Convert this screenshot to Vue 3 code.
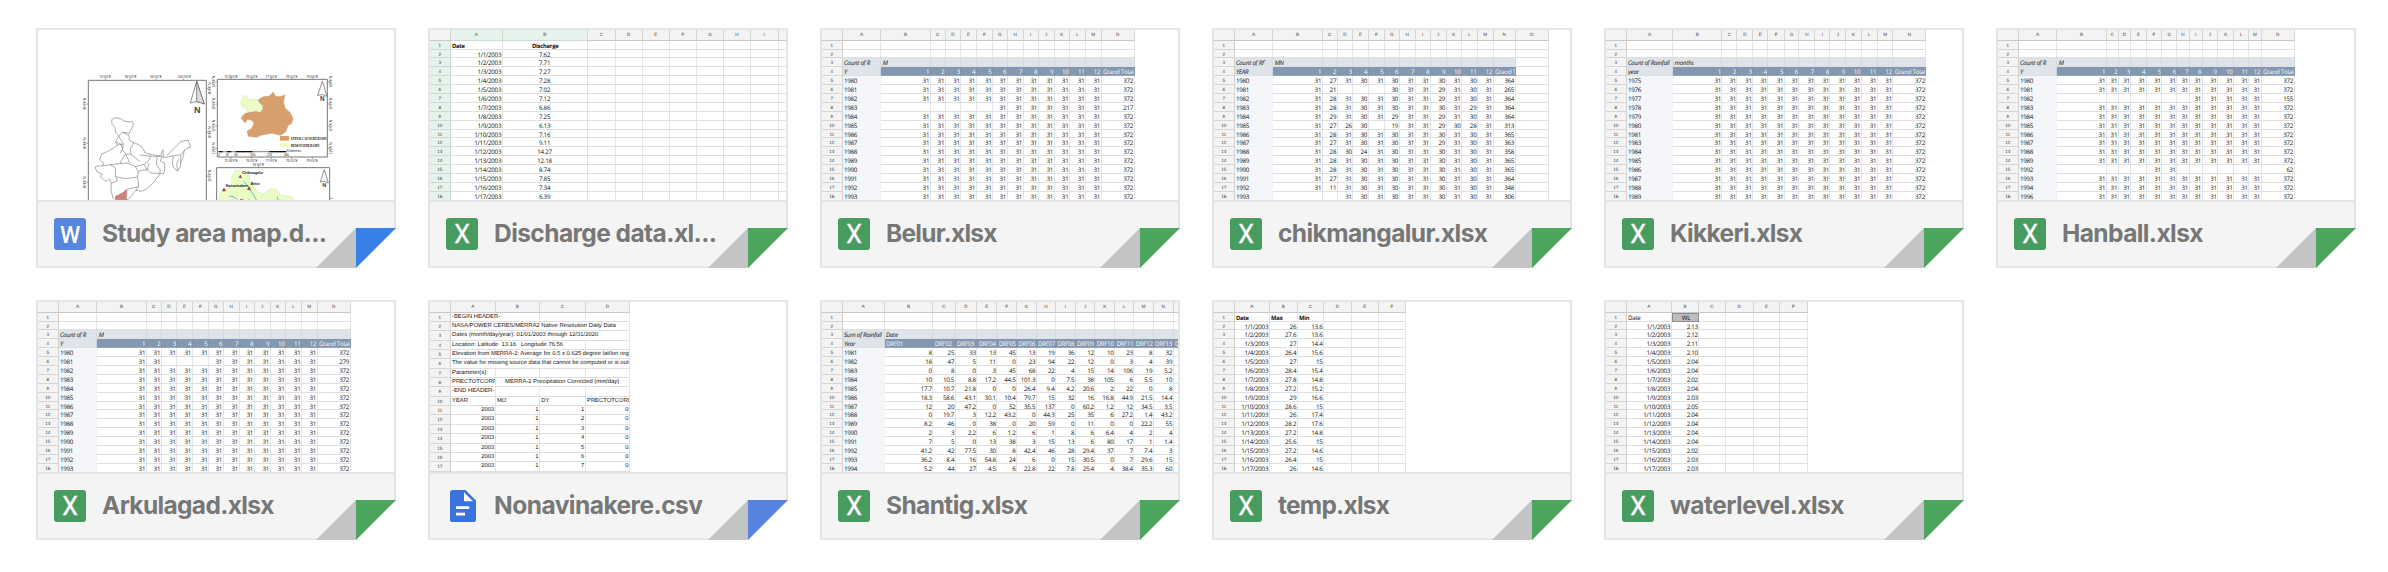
<script setup>
const months = ['1', '2', '3', '4', '5', '6', '7', '8', '9', '10', '11', '12']
const full = Array(12).fill('31').join(' ')
const letters = 'ABCDEFGHIJKLMNO'.split('')

// '_' marks an empty cell in the compact rows below
const parse = (line) => line.split(' ').map((v) => (v === '_' ? '' : v))

const monthly = (measure, rowField, colField, years, special = {}, total = 'Grand Total') => [
  [], [],
  [measure, colField],
  [rowField, ...months, total],
  ...years.map((y) => [String(y), ...parse(special[y] || full + ' 372')]),
]
const range = (a, b) => Array.from({ length: b - a + 1 }, (_, i) => a + i)

const pivotCols = [38.7, 49.3, 15, 15.7, 15.3, 16.3, 14.7, 16, 15, 16, 15.3, 16, 15.7, 33]
const dates = range(1, 17).map((d) => `1/${d}/2003`)
const noFirstHalf = '_ _ _ _ _ 31 31 31 31 31 31 31 217'

const discharge = parse('7.62 7.71 7.27 7.28 7.02 7.12 6.86 7.25 6.13 7.16 9.11 14.27 12.18 8.74 7.85 7.34 6.39')
const maxT = parse('26 27.6 27 26.4 27 28.4 27.8 27.2 29 28.6 26 28.2 27.2 25.6 27.2 26.4 26')
const minT = parse('13.6 13.6 14.4 15.6 15 15.4 14.8 15.2 16.6 15 17.4 17.6 14.8 15 14.6 15 14.6')
const levels = parse('2.13 2.12 2.11 2.10 2.04 2.04 2.02 2.04 2.03 2.05 2.04 2.04 2.04 2.04 2.02 2.03 2.03')

const chik = {
  1980: '31 27 31 30 31 30 31 31 30 31 30 31 364',
  1981: '31 21 _ _ _ 30 31 31 29 31 30 31 265',
  1982: '31 28 31 30 31 30 31 31 29 31 30 31 364',
  1983: '31 28 31 30 31 30 31 31 30 31 29 31 364',
  1984: '31 29 31 30 31 29 31 31 29 31 30 31 364',
  1985: '31 27 26 30 _ 19 31 31 29 30 28 31 313',
  1986: '31 28 31 30 31 30 31 31 30 31 30 31 365',
  1987: '31 27 31 30 31 30 31 31 29 31 30 31 363',
  1988: '31 28 30 24 31 30 31 31 30 31 30 31 358',
  1989: '31 28 31 30 31 30 31 31 30 31 30 31 365',
  1990: '31 28 31 30 31 30 31 31 30 31 30 31 365',
  1991: '31 27 31 30 31 30 31 31 30 31 30 31 364',
  1992: '31 11 31 30 31 30 31 31 30 31 30 31 348',
  1993: '_ _ 31 30 31 30 31 31 30 31 30 31 306',
}

const shantig = [
  '1981 8 25 33 13 45 13 19 36 12 10 23 8 32',
  '1982 18 47 5 11 0 23 94 22 12 0 3 4 39',
  '1983 0 8 0 3 45 68 22 4 15 14 106 19 5.2',
  '1984 10 10.5 8.8 17.2 44.5 101.3 0 7.5 38 105 6 5.5 10',
  '1985 17.7 10.7 21.8 0 0 26.4 9.4 4.2 20.6 2 22 0 8',
  '1986 18.3 58.6 43.1 30.1 10.4 79.7 15 32 16 16.8 44.9 21.5 14.4',
  '1987 12 20 47.2 0 52 35.5 137 0 60.2 1.2 12 34.5 3.5',
  '1988 0 19.7 3 12.2 43.2 0 44.3 25 35 6 27.2 1.4 43.2',
  '1989 8.2 46 0 38 0 20 59 0 11 0 0 22.2 55',
  '1990 2 3 2.2 6 1.2 6 1 8 6 6.4 4 2 4',
  '1991 7 5 0 13 38 3 15 13 6 80 17 1 1.4',
  '1992 41.2 42 77.5 30 8 42.4 46 28 29.4 37 7 7.4 3',
  '1993 36.2 8.4 16 54.8 24 6 0 15 30.5 0 7 29.6 15',
  '1994 5.2 44 27 4.5 6 22.8 22 7.8 25.4 4 38.4 35.3 60',
].map(parse)

const csvRows = [
  [{ t: '-BEGIN HEADER-', span: 2 }],
  [{ t: 'NASA/POWER CERES/MERRA2 Native Resolution Daily Data', span: 4 }],
  [{ t: 'Dates (month/day/year): 01/01/2003 through 12/31/2020', span: 4 }],
  [{ t: 'Location: Latitude  13.16   Longitude 76.56', span: 3 }],
  [{ t: 'Elevation from MERRA-2: Average for 0.5 x 0.625 degree lat/lon region', span: 4 }],
  [{ t: 'The value for missing source data that cannot be computed or is outside', span: 4 }],
  ['Parameter(s):'],
  ['PRECTOTCORR', { t: '     MERRA-2 Precipitation Corrected (mm/day)', span: 3 }],
  ['-END HEADER-'],
  ['YEAR', 'MO', 'DY', 'PRECTOTCORR'],
  ...range(1, 7).map((d) => ['2003', '1', String(d), '0']),
]

const files = [
  { name: 'Study area map.d...', width: 225, kind: 'word' },
  { name: 'Discharge data.xl...', width: 223, kind: 'excel',
    sheet: { type: 'selected', cols: [52, 85.3, 27.7, 27, 27, 27.3, 27.3, 26.4, 28, 20], named: 9,
      rows: [['Date', 'Discharge'], ...dates.map((d, i) => [d, discharge[i]])] } },
  { name: 'Belur.xlsx', width: 111.5, kind: 'excel',
    sheet: { type: 'pivot', cols: pivotCols, rows: monthly('Count of R', 'Y', 'M', range(1980, 1993), { 1983: noFirstHalf }) } },
  { name: 'chikmangalur.xlsx', width: 210, kind: 'excel',
    sheet: { type: 'pivot', cols: [...pivotCols.slice(0, 13), 22, 33], plainLast: true,
      rows: monthly('Count of RF', 'YEAR', 'MN', range(1980, 1993), chik) } },
  { name: 'Kikkeri.xlsx', width: 133, kind: 'excel',
    sheet: { type: 'pivot', cols: [46.5, ...pivotCols.slice(1)],
      rows: monthly('Count of Rainfall', 'year', 'months', [...range(1975, 1981), ...range(1983, 1989)]) } },
  { name: 'Hanball.xlsx', width: 141.5, kind: 'excel',
    sheet: { type: 'pivot', cols: [38.7, 49.3, 12, 12.7, 15.3, 15.7, 15, 12.3, 13, 15.7, 15.7, 15.3, 12.3, 33],
      rows: monthly('Count of R', 'Y', 'M', [...range(1980, 1989), 1992, 1993, 1994, 1996], {
        1982: '_ _ _ _ _ _ _ 31 31 31 31 31 155',
        1992: '_ _ _ _ 31 31 _ _ _ _ _ _ 62',
      }) } },
  { name: 'Arkulagad.xlsx', width: 172.5, kind: 'excel',
    sheet: { type: 'pivot', cols: pivotCols,
      rows: monthly('Count of R', 'Y', 'M', range(1980, 1993), { 1981: '31 31 _ _ _ 31 31 31 31 31 31 31 279' }) } },
  { name: 'Nonavinakere.csv', width: 209, kind: 'doc',
    sheet: { type: 'csv', cols: [45, 44.3, 45.7, 44.3], rows: csvRows } },
  { name: 'Shantig.xlsx', width: 142, kind: 'excel',
    sheet: { type: 'pivot', named: 14, cols: [42, 48.7, 22.3, 21.7, 20, 19.7, 19.7, 19.3, 19.7, 19.7, 19.7, 19.3, 19.3, 20, 20],
      rows: [[], [], ['Sum of Rainfall', 'Date'],
        ['Year', ...range(1, 14).map((n) => 'DRF' + String(n).padStart(2, '0'))], ...shantig] } },
  { name: 'temp.xlsx', width: 112, kind: 'excel',
    sheet: { type: 'boldhead', cols: [35, 28, 26.3, 27.7, 27, 27.3],
      rows: [['Date', 'Max', 'Min'], ...dates.map((d, i) => [d, maxT[i], minT[i]])] } },
  { name: 'waterlevel.xlsx', width: 174.5, kind: 'excel',
    sheet: { type: 'level', cols: [45, 27.7, 26.3, 28, 26.7, 27.3],
      rows: [['Date', 'WL'], ...dates.map((d, i) => [d, levels[i]])] } },
]

function cells(sheet, row, r) {
  const out = []
  for (let c = 0; c < sheet.cols.length;) {
    const v = row[out.length]
    const span = v && v.span ? v.span : 1
    const text = v && v.span ? v.t : v || ''
    const width = sheet.cols.slice(c, c + span).reduce((a, b) => a + b, 0)
    const cls = []
    const yearCell = sheet.type === 'pivot' && r > 3 && c === 0
    if (yearCell) cls.push('year')
    else if (/^[\d./]+$/.test(text)) cls.push('num')
    if (sheet.type === 'pivot' && !(sheet.plainLast && c === sheet.cols.length - 1)) {
      if (r === 2) cls.push('field')
      else if (r === 3) cls.push(c === 0 ? 'field' : 'head')
    }
    if (r === 0 && (sheet.type === 'selected' || sheet.type === 'boldhead')) cls.push('bold')
    if (sheet.type === 'selected' && c === 1) cls.push('mid')
    if (sheet.type === 'level' && r === 0 && c === 1) cls.push('mid', 'fill')
    out.push({ text, width, cls })
    c += span
  }
  return out
}
</script>

<template>
  <main class="grid">
    <article v-for="f in files" :key="f.name" class="card">
      <div class="thumb">
        <div v-if="f.sheet" class="sheet" :class="f.sheet.type">
          <div class="row top">
            <span class="rh"></span>
            <span v-for="(w, i) in f.sheet.cols" :key="i" class="ch"
              :class="{ sel: f.sheet.type === 'selected' && i < 2 }" :style="{ width: w + 'px' }">{{ i < (f.sheet.named || 99) ? letters[i] : '' }}</span>
          </div>
          <div v-for="(row, r) in f.sheet.rows" :key="r" class="row">
            <span class="rh">{{ r + 1 }}</span>
            <span v-for="(c, i) in cells(f.sheet, row, r)" :key="i" class="cell" :class="c.cls"
              :style="{ width: c.width + 'px' }">{{ c.text }}</span>
          </div>
        </div>
        <svg v-else class="map" viewBox="24 30 1068 510" width="356" height="170">
          <g fill="none" stroke="#777" stroke-width="3">
            <path d="M175 545V181H529V545" />
            <path d="M562 178H892V411H562Z" />
            <path d="M560 545V443H899V545" />
          </g>
          <g stroke="#777" stroke-width="2">
            <path d="M226 175v6M300 175v6M378 175v6M460 175v6M169 252h6M169 370h6M169 487h6M529 205h6M529 337h6M529 468h6M603 172v6M665 172v6M724 172v6M785 172v6M847 172v6M603 411v6M665 411v6M724 411v6M785 411v6M847 411v6M556 185h6M556 252h6M556 318h6M556 385h6M892 185h6M892 252h6M892 318h6M892 385h6M899 535h9M685 437v6" />
          </g>
          <g class="tick">
            <text x="226" y="174">70°0'0"E</text><text x="302" y="174">80°0'0"E</text><text x="378" y="174">90°0'0"E</text><text x="463" y="174">100°0'0"E</text>
            <text x="603" y="173">75°30'0"E</text><text x="665" y="173">76°0'0"E</text><text x="724" y="173">77°0'0"E</text><text x="785" y="173">78°0'0"E</text><text x="847" y="173">79°0'0"E</text>
            <text x="603" y="426">75°30'0"E</text><text x="665" y="426">76°0'0"E</text><text x="724" y="426">77°0'0"E</text><text x="785" y="426">78°0'0"E</text><text x="847" y="426">79°0'0"E</text>
            <text x="685" y="438">76°0'0"E</text>
            <text transform="translate(169 252) rotate(-90)">30°0'0"N</text><text transform="translate(169 370) rotate(-90)">20°0'0"N</text><text transform="translate(169 487) rotate(-90)">10°0'0"N</text>
            <text transform="translate(542 205) rotate(-90)">30°0'0"N</text><text transform="translate(542 337) rotate(-90)">20°0'0"N</text><text transform="translate(542 468) rotate(-90)">10°0'0"N</text>
            <text transform="translate(556 185) rotate(-90)">14°0'0"N</text><text transform="translate(556 252) rotate(-90)">13°0'0"N</text><text transform="translate(556 318) rotate(-90)">12°0'0"N</text><text transform="translate(556 385) rotate(-90)">11°0'0"N</text>
            <text transform="translate(905 185) rotate(-90)">14°0'0"N</text><text transform="translate(905 252) rotate(-90)">13°0'0"N</text><text transform="translate(905 318) rotate(-90)">12°0'0"N</text><text transform="translate(905 385) rotate(-90)">11°0'0"N</text>
          </g>
          <g fill="#fff" stroke="#555" stroke-width="2">
            <path d="M500 184L481 249Q500 240 523 252Z" /><path d="M500 184L523 252L500 244Z" fill="#ddd" />
            <path d="M877 184L863 226Q877 220 891 229Z" />
            <path d="M883 449L871 486Q883 480 895 489Z" />
          </g>
          <text class="north" x="502" y="279" font-size="27">N</text>
          <text class="north" x="877" y="243" font-size="19">N</text>
          <text class="north" x="883" y="501" font-size="17">N</text>
          <path d="M256 545L256 529L275 520L291 508L289 545Z" fill="#cd8580" stroke="#a55" />
          <g fill="none" stroke="#777" stroke-width="1.8" stroke-linejoin="round">
            <path d="M245 299L256 293L272 296L283 303L297 306L307 304L310 315L303 329L298 340L287 338L278 337L266 348L258 338L255 323L246 313Z" />
            <path d="M266 348L257 366L262 375L250 385L233 394L215 402L209 420L220 429L219 438L204 437L195 442L202 456L218 463L210 470L228 484L239 477L244 490L243 511L250 538M266 348L280 372L277 390L287 402L277 416L270 431L241 434L219 438M278 337L297 346L298 361L312 368L301 387L303 403L330 425M312 368L334 378L346 399L390 409L399 389L400 413L452 404L471 384L482 382L474 360L452 365L430 388L410 407M330 405L368 409L400 408M287 402L303 403M262 375L280 372M357 429L352 450L362 459L378 460L389 460L401 462L405 445L403 429L391 423L396 408M352 450L342 433L358 420L362 409M241 434L256 444L257 470L287 476L323 471L325 454L316 440L292 429L270 431M316 440L342 433M325 454L339 450L352 450M323 471L326 500L318 510L334 514L350 507L372 486L390 461M326 500L291 508M278 545L298 535L318 510M430 408L427 432L432 444L443 453L452 438L452 404M443 453L440 430L446 418M463 388L459 412L453 427M382 409L379 433L391 450L389 460" />
            <path d="M257 366L271 371L278 386L270 400M244 490L262 482L257 470M287 402L300 430" />
          </g>
          <path d="M684 240L700 230L718 228L730 216L736 228L748 230L765 225L760 246L766 266L779 276L789 295L785 310L774 317L767 335L752 346L725 340L692 346L680 352L655 349L651 334L664 326L672 311L668 302L653 298L645 309L633 294L645 280L676 274L692 276L698 263Z" fill="#d69f6c" stroke="#b98659" />
          <path d="M632 246L637 239L641 227L650 227L657 239L671 236L683 240L685 249L697 255L698 267L691 276L678 272L653 276L647 265L636 260Z" fill="#ebfdc5" stroke="#ccdda7" />
          <path d="M750 348h27v14h-27z" fill="#d69f6c" /><path d="M750 369h27v12h-27z" fill="#ebfdc5" />
          <text class="legend" x="782" y="360" textLength="108">UPPER CAUVERY BASIN</text>
          <text class="legend" x="782" y="380" textLength="86">HEMAVATHI BASIN</text>
          <path d="M566 395H769" stroke="#999" stroke-width="4" /><path d="M566 395h12M591 395h13M617 395h51M718 395h51" stroke="#111" stroke-width="4" />
          <text class="scale" x="771" y="397" textLength="43">Kilometers</text>
          <text class="scale" x="565" y="408">0</text><text class="scale" x="587" y="408">45</text><text class="scale" x="613" y="408">90</text><text class="scale" x="661" y="408">180</text><text class="scale" x="711" y="408">270</text><text class="scale" x="762" y="408">360</text>
          <path d="M566 545L571 518L582 509L604 502L606 467L617 450L630 452L644 461L659 466L658 487L669 489L679 513L701 523L720 506L740 508L752 526L783 529L798 545Z" fill="#ebfdc5" stroke="#c3d69c" />
          <path d="M640 484L655 500L680 541M597 528L610 530L622 538M742 530L745 545" fill="none" stroke="#68b7c7" stroke-width="3" />
          <g fill="#b33a2b" stroke="#712" stroke-width="1"><path d="M631 465l4 8h-8zM582 504l5 9h-10zM657 500l5 9h-10z" /></g>
          <g class="place">
            <text x="636" y="461" textLength="64">Chikmagalur</text><text x="587" y="500" textLength="68">Nonavinakere</text><text x="662" y="494" textLength="28">Belur</text><text x="630" y="545" textLength="36">Shantig</text>
          </g>
        </svg>
      </div>
      <footer class="foot">
        <svg class="icon" viewBox="0 0 32 32" width="32" height="32">
          <template v-if="f.kind === 'doc'">
            <path d="M6.6 0H19.5L30 10.4V29.4A2.6 2.6 0 0 1 27.4 32H6.6A2.6 2.6 0 0 1 4 29.4V2.6A2.6 2.6 0 0 1 6.6 0Z" fill="#3a72e0" />
            <path d="M18 2.3V11.2H27ZM10 16.2H23.2V19H10ZM10 22.8H19V25.6H10Z" fill="#fff" />
          </template>
          <template v-else>
            <rect width="32" height="32" rx="3" :fill="f.kind === 'word' ? '#5886df' : '#489c60'" />
            <text v-if="f.kind === 'word'" class="w" x="16" y="24.6">W</text>
            <text v-else class="x" x="16" y="24.8">X</text>
          </template>
        </svg>
        <svg class="title" width="240" height="40">
          <text x="0" y="28" :textLength="f.width">{{ f.name }}</text>
        </svg>
      </footer>
      <svg class="corner" viewBox="0 0 80 40" width="80" height="40">
        <path d="M40 40L80 0V40Z" fill="#fff" />
        <path d="M40 0V40H0Z" fill="#c4c4c4" />
        <path d="M40 0H80L40 40Z" :fill="f.kind === 'word' ? '#3880e8' : f.kind === 'doc' ? '#5783e0' : '#4ba55c'" />
      </svg>
    </article>
  </main>
</template>

<style>
body { margin: 0; background: #fff; }
</style>

<style scoped>
.grid {
  display: grid;
  grid-template-columns: repeat(6, 360px);
  gap: 32px;
  box-sizing: border-box;
  height: 572px;
  padding: 28px 32px 32px 36px;
  overflow: hidden;
  align-content: start;
}
.card {
  position: relative;
  box-sizing: border-box;
  width: 360px;
  height: 240px;
  border: 2px solid #e5e5e5;
  background: #fff;
}
.thumb { height: 170px; overflow: hidden; }
.foot {
  display: flex;
  align-items: center;
  gap: 16px;
  box-sizing: border-box;
  height: 66px;
  padding-left: 16px;
  border-top: 2px solid #e5e5e5;
  background: #f4f4f4;
}
.icon { flex: none; }
.title { flex: none; overflow: visible; }
.title text { font: 650 24.5px Inter, sans-serif; fill: #777; }
.x { font: 400 25px Roboto, sans-serif; fill: #fff; stroke: #fff; stroke-width: 0.3px; text-anchor: middle; }
.w { font: 500 23px Roboto, sans-serif; fill: #fff; text-anchor: middle; }
.corner { position: absolute; right: -2px; bottom: -2px; }
.map { display: block; }

.sheet {
  width: max-content;
  font: 500 6.2px/10.2px "Open Sans", sans-serif;
  letter-spacing: -0.25px;
  text-rendering: geometricPrecision;
  color: #111;
}
.row { display: flex; height: 8.9px; }
.row > span {
  flex: none;
  box-sizing: border-box;
  border-right: 1px solid #e4e4e4;
  border-bottom: 1px solid #e0e0e0;
  white-space: pre;
}
.row > .rh, .row > .ch {
  background: #f3f3f3;
  border-color: #d6d6d6;
  color: #444;
  font: 4.6px/9.4px "Liberation Sans", sans-serif;
  letter-spacing: 0;
  text-align: center;
}
.row > .rh { width: 20.7px; border-right-color: #d2d2d2; }
.row.top { height: 10.7px; }
.row.top > span { line-height: 10.7px; border-bottom-color: #c8c8c8; }
.row > .cell { padding: 0 0.5px 0 1.3px; overflow: hidden; }
.row > .num { padding-left: 0; text-align: right; }
.row > .mid { text-align: center; }
.row > .bold { font-weight: 700; font-size: 5.8px; }
.row > .fill { background: #bdbdbd; border: 1px solid #8c8c8c; line-height: 8px; }
.row > .field { background: #dfe4eb; border-color: #dbe0e7; border-right-color: #d3d9e1; font-style: italic; }
.row > .head { background: #8497b0; border-color: #95a6bc; border-right-color: #8295ae; color: #f6f8fb; letter-spacing: -0.32px; }
.row > .year { background: #f4f6f9; border-color: #f0f2f5; }
.selected .row:not(.top) > .rh, .selected .row > .sel { background: #e6f3ec; border-color: #cbdcd2; }
.csv { font: 5.87px/9.8px "Liberation Sans", sans-serif; letter-spacing: 0; }
.csv .row:not(.top) { height: 9.35px; }

.tick text { font: 400 9px "Liberation Sans", sans-serif; fill: #222; text-anchor: middle; }
.north { font-family: "Liberation Sans", sans-serif; font-weight: 700; fill: #444; text-anchor: middle; }
.legend { font: 700 10px "Liberation Serif", serif; fill: #222; }
.scale { font: 400 9px "Liberation Sans", sans-serif; fill: #222; }
.place text { font: 700 11px "Liberation Sans", sans-serif; fill: #222; }
</style>
